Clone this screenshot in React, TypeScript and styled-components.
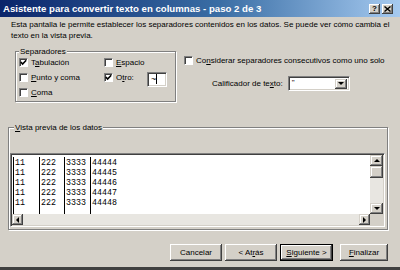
import React from "react";
import styled, { createGlobalStyle } from "styled-components";

const Global = createGlobalStyle`
  html, body { margin: 0; padding: 0; background: #d4d0c8; }
  body { font-family: "Liberation Sans", Arial, sans-serif; font-size: 8px; color: #000; }
  * { box-sizing: border-box; }
`;

const Window = styled.div`
  width: 400px;
  height: 270px;
  background: #d4d0c8;
  display: flex;
  flex-direction: column;
  border-bottom: 3px solid #404040;
  overflow: hidden;
`;

const TitleBar = styled.div`
  height: 17px;
  flex: none;
  display: flex;
  align-items: center;
  padding: 0 7px 0 3px;
  background: linear-gradient(to right, #0a246a 0%, #3a6ea5 55%, #a6caf0 100%);
`;

const Title = styled.div`
  flex: 1;
  color: #fff;
  font-weight: bold;
  font-size: 9.65px;
  white-space: nowrap;
`;

const TitleButtons = styled.div`
  display: flex;
  gap: 2px;
`;

const TitleButton = styled.div`
  width: 11px;
  height: 10px;
  background: #d4d0c8;
  display: flex;
  align-items: center;
  justify-content: center;
  font-weight: bold;
  font-size: 8px;
  box-shadow: inset -1px -1px #404040, inset 1px 1px #fff, inset -2px -2px #808080;
`;

const Body = styled.div`
  flex: 1;
  display: flex;
  flex-direction: column;
  padding: 2px 12px 0 8px;
`;

const Description = styled.p`
  margin: 0 0 0 3px;
  line-height: 11px;
  font-size: 8px;
  white-space: nowrap;
`;

const Middle = styled.div`
  display: flex;
  align-items: flex-start;
  margin-top: 7px;
`;

const Group = styled.fieldset<{ $width: number; $legendOffset: number }>`
  margin: 0;
  width: ${(p) => p.$width}px;
  border: 1px solid #808080;
  box-shadow: inset 1px 1px 0 #fff, 1px 1px 0 #fff;
  padding: 0;
  min-width: 0;
  & > legend {
    margin-left: ${(p) => p.$legendOffset}px;
    padding: 0 1px;
    height: 7px;
    line-height: 7px;
    background: #d4d0c8;
  }
`;

const SepGroup = styled(Group)`
  margin-left: 7px;
  padding: 0 3px 1px 3px;
  display: grid;
  grid-template-columns: 85px 43px 1fr;
  grid-auto-rows: 15px;
  align-items: center;
`;

const U = styled.span`
  text-decoration: underline;
`;

const CheckRow = styled.label`
  display: flex;
  align-items: center;
  gap: 3px;
  white-space: nowrap;
`;

const Box = styled.span`
  width: 9px;
  height: 9px;
  flex: none;
  background: #fff;
  border-top: 1px solid #808080;
  border-left: 1px solid #808080;
  border-right: 1px solid #fff;
  border-bottom: 1px solid #fff;
  box-shadow: inset 1px 1px 0 #404040;
  display: flex;
  align-items: center;
  justify-content: center;
`;

const Check = ({ checked, children }: { checked?: boolean; children: React.ReactNode }) => (
  <CheckRow>
    <Box>
      {checked && (
        <svg width="7" height="7" viewBox="0 0 7 7">
          <polyline points="0.8,3 2.6,5 6.2,1.2" fill="none" stroke="#000" strokeWidth="1.6" />
        </svg>
      )}
    </Box>
    <span>{children}</span>
  </CheckRow>
);

const Sunken = styled.div`
  background: #fff;
  border-top: 1px solid #808080;
  border-left: 1px solid #808080;
  border-right: 1px solid #fff;
  border-bottom: 1px solid #fff;
  box-shadow: inset 1px 1px 0 #404040, inset -1px -1px 0 #d4d0c8;
`;

const OtherInput = styled(Sunken)`
  width: 20px;
  height: 15px;
  margin-top: 4px;
  padding: 2px 0 0 3px;
  line-height: 9px;
  font-size: 9px;
`;

const Caret = styled.span`
  border-right: 1px solid #000;
`;

const RightCol = styled.div`
  display: flex;
  flex-direction: column;
  padding: 7px 0 0 8px;
`;

const ConsRow = styled.div`
  height: 11px;
  display: flex;
  align-items: center;
`;

const QualRow = styled.div`
  display: flex;
  align-items: center;
  gap: 5px;
  margin: 10px 0 0 28px;
`;

const Combo = styled(Sunken)`
  width: 62px;
  height: 15px;
  display: flex;
  justify-content: space-between;
  padding: 2px 2px 2px 3px;
  line-height: 8px;
`;

const RaisedBtn = styled.div<{ $w: number; $h: number }>`
  width: ${(p) => p.$w}px;
  height: ${(p) => p.$h}px;
  flex: none;
  background: #d4d0c8;
  display: flex;
  align-items: center;
  justify-content: center;
  box-shadow: inset -1px -1px #404040, inset 1px 1px #d4d0c8, inset -2px -2px #808080, inset 2px 2px #fff;
`;

const Arrow = ({ dir }: { dir: "up" | "down" | "left" | "right" }) => {
  const pts = {
    up: "1,5 4,2 7,5",
    down: "1,2 4,5 7,2",
    left: "5,1 2,4 5,7",
    right: "2,1 5,4 2,7",
  }[dir];
  return (
    <svg width="8" height="8" viewBox="0 0 8 8">
      <polygon points={pts} fill="#000" />
    </svg>
  );
};

const PreviewGroup = styled(Group)`
  margin-top: 22px;
  padding: 22px 2px 2px 1px;
`;

const Frame = styled.div`
  display: grid;
  grid-template-columns: 358px 13px;
  grid-template-rows: 59px 11px;
  border-top: 1px solid #808080;
  border-left: 1px solid #808080;
  border-right: 1px solid #fff;
  border-bottom: 1px solid #fff;
  box-shadow: inset 1px 1px 0 #404040, inset -1px -1px 0 #d4d0c8;
  padding: 1px;
  width: 375px;
`;

const DataArea = styled.div`
  background: #fff;
  display: flex;
  padding: 2px 0 0 1px;
  overflow: hidden;
`;

const DataCol = styled.div<{ $w?: number }>`
  border-left: 1px solid #000;
  ${(p) => (p.$w ? `width: ${p.$w}px;` : "flex: 1;")}
  font-family: "Liberation Mono", "Courier New", monospace;
  font-size: 8.3px;
  line-height: 10px;
  padding: 1px 0 0 1px;
`;

const VScroll = styled.div`
  display: flex;
  flex-direction: column;
  background: #e8e6e1;
`;

const Track = styled.div`
  flex: 1;
  background: #e8e6e1;
`;

const HScroll = styled.div`
  display: flex;
  background: #e8e6e1;
`;

const Corner = styled.div`
  background: #d4d0c8;
`;

const ButtonRow = styled.div`
  display: flex;
  justify-content: flex-end;
  gap: 3px;
  margin-top: 14px;
`;

const Button = styled.button<{ $w: number; $default?: boolean; $gapBefore?: number }>`
  width: ${(p) => p.$w}px;
  height: 17px;
  margin-left: ${(p) => p.$gapBefore ?? 0}px;
  padding: 0;
  font: inherit;
  font-size: 8px;
  color: #000;
  background: #d4d0c8;
  border: ${(p) => (p.$default ? "1px solid #000" : "none")};
  box-shadow: inset -1px -1px #404040, inset 1px 1px #fff, inset -2px -2px #808080;
`;

const columns: { w?: number; values: string[] }[] = [
  { w: 26, values: ["11", "11", "11", "11", "11"] },
  { w: 25, values: ["222", "222", "222", "222", "222"] },
  { w: 26, values: ["3333", "3333", "3333", "3333", "3333"] },
  { values: ["44444", "44445", "44446", "44447", "44448"] },
];

export default function App() {
  return (
    <>
      <Global />
      <Window>
        <TitleBar>
          <Title>Asistente para convertir texto en columnas - paso 2 de 3</Title>
          <TitleButtons>
            <TitleButton>?</TitleButton>
            <TitleButton>
              <svg width="7" height="6" viewBox="0 0 7 6">
                <path d="M0.5 0.5 L6.5 5.5 M6.5 0.5 L0.5 5.5" stroke="#000" strokeWidth="1.4" />
              </svg>
            </TitleButton>
          </TitleButtons>
        </TitleBar>
        <Body>
          <Description>
            Esta pantalla le permite establecer los separadores contenidos en los datos. Se puede ver cómo cambia el
            <br />
            texto en la vista previa.
          </Description>
          <Middle>
            <SepGroup $width={161} $legendOffset={0}>
              <legend>Separadores</legend>
              <Check checked>
                T<U>a</U>bulación
              </Check>
              <Check>
                <U>E</U>spacio
              </Check>
              <span />
              <Check>
                <U>P</U>unto y coma
              </Check>
              <Check checked>
                O<U>t</U>ro:
              </Check>
              <OtherInput>
                <Caret>~</Caret>
              </OtherInput>
              <Check>
                <U>C</U>oma
              </Check>
            </SepGroup>
            <RightCol>
              <ConsRow>
                <Check>
                  Co<U>n</U>siderar separadores consecutivos como uno solo
                </Check>
              </ConsRow>
              <QualRow>
                <span>
                  Calificador de te<U>x</U>to:
                </span>
                <Combo>
                  <span>"</span>
                  <RaisedBtn $w={12} $h={10}>
                    <Arrow dir="down" />
                  </RaisedBtn>
                </Combo>
              </QualRow>
            </RightCol>
          </Middle>
          <PreviewGroup $width={380} $legendOffset={4}>
            <legend>
              <U>V</U>ista previa de los datos
            </legend>
            <Frame>
              <DataArea>
                {columns.map((c, i) => (
                  <DataCol key={i} $w={c.w}>
                    {c.values.map((v, j) => (
                      <div key={j}>{v}</div>
                    ))}
                  </DataCol>
                ))}
              </DataArea>
              <VScroll>
                <RaisedBtn $w={13} $h={11}>
                  <Arrow dir="up" />
                </RaisedBtn>
                <RaisedBtn $w={13} $h={12} />
                <Track />
                <RaisedBtn $w={13} $h={11}>
                  <Arrow dir="down" />
                </RaisedBtn>
              </VScroll>
              <HScroll>
                <RaisedBtn $w={11} $h={11}>
                  <Arrow dir="left" />
                </RaisedBtn>
                <Track />
                <RaisedBtn $w={11} $h={11}>
                  <Arrow dir="right" />
                </RaisedBtn>
              </HScroll>
              <Corner />
            </Frame>
          </PreviewGroup>
          <ButtonRow>
            <Button $w={52}>Cancelar</Button>
            <Button $w={52}>
              &lt; At<U>r</U>ás
            </Button>
            <Button $w={53} $default>
              <U>S</U>iguiente &gt;
            </Button>
            <Button $w={48} $gapBefore={4}>
              <U>F</U>inalizar
            </Button>
          </ButtonRow>
        </Body>
      </Window>
    </>
  );
}
